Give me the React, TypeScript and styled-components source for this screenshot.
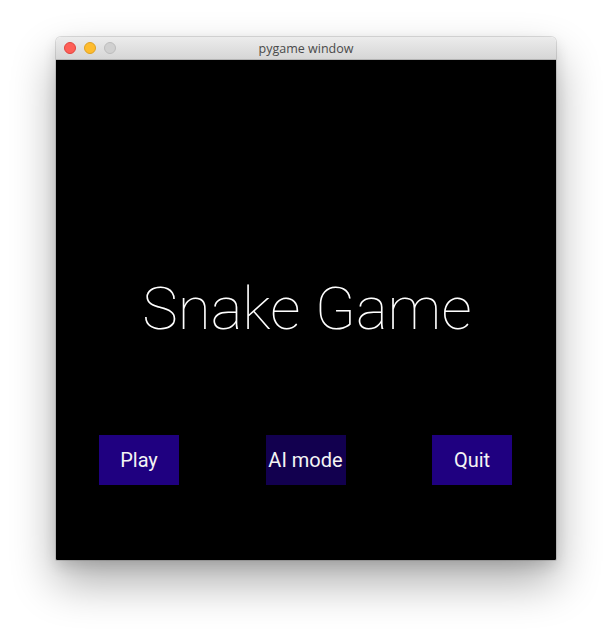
import React from "react";
import styled, { createGlobalStyle } from "styled-components";

const Global = createGlobalStyle`
  html, body { margin: 0; padding: 0; background: #ffffff; }
  body { width: 612px; height: 634px; overflow: hidden; }
`;

const Page = styled.div`
  width: 612px;
  height: 634px;
  padding: 37px 0 0 56px;
  box-sizing: border-box;
  background: #ffffff;
`;

const Window = styled.div`
  width: 500px;
  border-radius: 5px 5px 1px 1px;
  overflow: hidden;
  box-shadow: 0 0 0 1px rgba(0, 0, 0, 0.12), 0 22px 45px rgba(0, 0, 0, 0.33), 0 6px 14px rgba(0, 0, 0, 0.12);
`;

const TitleBar = styled.div`
  position: relative;
  height: 23px;
  box-sizing: border-box;
  background: linear-gradient(#ececec, #d6d6d6);
  border-bottom: 1px solid #b4b4b4;
  display: flex;
  align-items: center;
  justify-content: center;
`;

const Lights = styled.div`
  position: absolute;
  left: 8px;
  top: 5px;
  display: flex;
  gap: 8px;
`;

const Light = styled.span<{ $c: string; $b: string }>`
  width: 12px;
  height: 12px;
  border-radius: 50%;
  box-sizing: border-box;
  background: ${(p) => p.$c};
  border: 0.5px solid ${(p) => p.$b};
`;

const TitleText = styled.span`
  font-family: "Open Sans", "Liberation Sans", Arial, sans-serif;
  font-size: 12.5px;
  color: #4a4a4a;
  margin-top: 1px;
`;

const Content = styled.div`
  height: 500px;
  background: #000000;
  display: flex;
  flex-direction: column;
  align-items: stretch;
`;

const Title = styled.h1`
  margin: 207px 0 0;
  height: 84px;
  line-height: 84px;
  text-align: center;
  font-family: Roboto, sans-serif;
  font-weight: 100;
  font-size: 60px;
  color: #ffffff;
  padding-left: 2px;
`;

const ButtonRow = styled.div`
  margin-top: 84px;
  padding: 0 44px 0 43px;
  display: flex;
  justify-content: space-between;
`;

const Button = styled.div<{ $dark?: boolean }>`
  width: 80px;
  height: 50px;
  background: ${(p) => (p.$dark ? "#12004f" : "#1f0080")};
  display: flex;
  align-items: center;
  justify-content: center;
  font-family: Roboto, sans-serif;
  font-size: 20px;
  color: #f4f4f4;
  white-space: nowrap;
`;

export default function App() {
  return (
    <>
      <Global />
      <Page>
        <Window>
          <TitleBar>
            <Lights>
              <Light $c="#fe5f57" $b="#e0443e" />
              <Light $c="#febc2e" $b="#dea123" />
              <Light $c="#d0d0d0" $b="#bcbcbc" />
            </Lights>
            <TitleText>pygame window</TitleText>
          </TitleBar>
          <Content>
            <Title>Snake Game</Title>
            <ButtonRow>
              <Button>Play</Button>
              <Button $dark>AI mode</Button>
              <Button>Quit</Button>
            </ButtonRow>
          </Content>
        </Window>
      </Page>
    </>
  );
}
